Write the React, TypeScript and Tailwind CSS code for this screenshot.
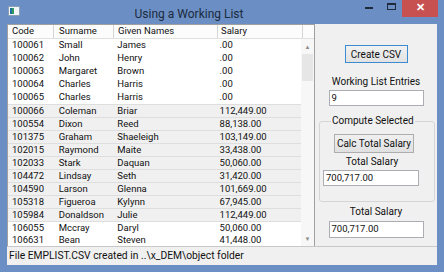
import React from 'react';

type Row = { code: string; surname: string; given: string; salary: string; sel?: boolean };

const rows: Row[] = [
  { code: '100061', surname: 'Small', given: 'James', salary: '.00' },
  { code: '100062', surname: 'John', given: 'Henry', salary: '.00' },
  { code: '100063', surname: 'Margaret', given: 'Brown', salary: '.00' },
  { code: '100064', surname: 'Charles', given: 'Harris', salary: '.00' },
  { code: '100065', surname: 'Charles', given: 'Harris', salary: '.00' },
  { code: '100066', surname: 'Coleman', given: 'Briar', salary: '112,449.00', sel: true },
  { code: '100554', surname: 'Dixon', given: 'Reed', salary: '88,138.00', sel: true },
  { code: '101375', surname: 'Graham', given: 'Shaeleigh', salary: '103,149.00', sel: true },
  { code: '102015', surname: 'Raymond', given: 'Maite', salary: '33,438.00', sel: true },
  { code: '102033', surname: 'Stark', given: 'Daquan', salary: '50,060.00', sel: true },
  { code: '104472', surname: 'Lindsay', given: 'Seth', salary: '31,420.00', sel: true },
  { code: '104590', surname: 'Larson', given: 'Glenna', salary: '101,669.00', sel: true },
  { code: '105318', surname: 'Figueroa', given: 'Kylynn', salary: '67,945.00', sel: true },
  { code: '105984', surname: 'Donaldson', given: 'Julie', salary: '112,449.00', sel: true },
  { code: '106055', surname: 'Mccray', given: 'Daryl', salary: '50,060.00' },
  { code: '106631', surname: 'Bean', given: 'Steven', salary: '41,448.00' },
];

const font = { fontFamily: 'Roboto, "Open Sans", sans-serif' };

// маленькая иконка формы в заголовке
const FormIcon = () => (
  <svg width="12" height="10" viewBox="0 0 12 10">
    <rect x="0.5" y="0.5" width="11" height="9" fill="#f4f6f8" stroke="#8aa0b8" />
    <rect x="2" y="2" width="4" height="6" fill="#2e9a5e" />
    <rect x="2" y="2" width="2" height="6" fill="#1f6f9a" />
  </svg>
);

const TextBox = ({ value, className }: { value: string; className: string }) => (
  <div className={`bg-white border border-[#abadb3] flex items-center pl-[2px] text-[9.5px] text-[#111] ${className}`}>
    {value}
  </div>
);

const App: React.FC = () => {
  return (
    <div className="w-[444px] h-[272px] bg-[#6b8fc4] flex flex-col overflow-hidden" style={font}>
      {/* Заголовок окна */}
      <div className="h-[24px] flex items-start relative">
        <div className="pl-[8px] pt-[6px]">
          <FormIcon />
        </div>
        <div className="flex-1 text-center text-[12px] text-[#1b2a3c] pt-[5px]">Using a Working List</div>
        <div className="flex items-start">
          <div className="w-[22px] h-[16px] flex items-center justify-center">
            <div className="w-[8px] h-[2px] bg-[#1f2b3a]" />
          </div>
          <div className="w-[22px] h-[16px] flex items-center justify-center">
            <div className="w-[9px] h-[7px] border border-[#1f2b3a] border-t-2 mb-[4px]" />
          </div>
          <div className="w-[36px] h-[17px] bg-[#c75050] flex items-center justify-center text-white text-[11px] font-bold mr-[6px]">
            ✕
          </div>
        </div>
      </div>

      {/* Клиентская область */}
      <div className="flex-1 mx-[7px] mb-[7px] bg-[#f0f0f0] flex flex-col min-h-0">
        <div className="flex flex-1 min-h-0">
          {/* Таблица */}
          <div className="w-[308px] border border-b-0 border-[#a0a0a0] bg-white flex flex-col text-[9.5px] text-[#111]">
            <div className="h-[14px] flex border-b border-[#e0e0e0] bg-[#fcfcfc]">
              <div className="w-[46px] pl-[4px] border-r border-[#d5d5d5] flex items-center">Code</div>
              <div className="w-[60px] pl-[5px] border-r border-[#d5d5d5] flex items-center">Surname</div>
              <div className="w-[104px] pl-[4px] border-r border-[#d5d5d5] flex items-center">Given Names</div>
              <div className="w-[85px] pl-[3px] border-r border-[#d5d5d5] flex items-center">Salary</div>
              <div className="flex-1" />
            </div>
            <div className="flex flex-1 min-h-0">
              <div className="w-[293px] overflow-hidden">
                {rows.map((r, i) => (
                  <div
                    key={r.code}
                    className={`h-[13px] flex items-center ${
                      r.sel ? 'bg-[#f0f0f0] border-t border-[#dedede]' : ''
                    } ${!r.sel && i > 0 && rows[i - 1].sel ? 'border-t border-[#dedede]' : ''}`}
                  >
                    <div className="w-[46px] pl-[4px]">{r.code}</div>
                    <div className="w-[60px] pl-[5px]">{r.surname}</div>
                    <div className="w-[104px] pl-[4px]">{r.given}</div>
                    <div className="w-[85px] pl-[3px]">{r.salary}</div>
                  </div>
                ))}
              </div>
              {/* Полоса прокрутки */}
              <div className="flex-1 bg-[#f7f7f7] flex flex-col items-stretch">
                <div className="h-[15px] flex items-center justify-center text-[6px] text-[#8a8a8a]">▲</div>
                <div className="h-[27px] mx-[1px] bg-[#e6e6e6]" />
                <div className="flex-1" />
                <div className="h-[15px] flex items-center justify-center text-[6px] text-[#8a8a8a]">▼</div>
              </div>
            </div>
          </div>

          {/* Правая панель */}
          <div className="flex-1 flex flex-col items-center text-[10px] text-[#111]">
            <div className="mt-[21px] w-[63px] h-[18px] border border-[#3c8bd0] bg-gradient-to-b from-[#f2f2f2] to-[#e2e2e2] flex items-center justify-center">
              Create CSV
            </div>
            <div className="mt-[13px] h-[12px] leading-[12px]">Working List Entries</div>
            <TextBox value="9" className="mt-[2px] w-[95px] h-[16px]" />

            <div className="mt-[15px] w-[116px] h-[81px] ml-[2px] border border-[#d5d5d5] rounded-[3px] relative flex flex-col items-start">
              <div className="absolute top-[-7px] left-[11px] px-[1px] bg-[#f0f0f0] leading-[12px]">Compute Selected</div>
              <div className="mt-[12px] ml-[14px] w-[80px] h-[19px] border border-[#adadad] bg-gradient-to-b from-[#f0f0f0] to-[#e0e0e0] flex items-center justify-center">
                Calc Total Salary
              </div>
              <div className="mt-[3px] w-[104px] text-center leading-[12px]">Total Salary</div>
              <TextBox value="700,717.00" className="mt-[2px] ml-[3px] w-[96px] h-[16px]" />
            </div>

            <div className="mt-[4px] leading-[12px]">Total Salary</div>
            <TextBox value="700,717.00" className="mt-[3px] w-[95px] h-[17px]" />
          </div>
        </div>

        {/* Строка состояния */}
        <div className="h-[19px] border-t border-[#c8c8c8] flex items-center pl-[2px] text-[10.3px] text-[#111]">
          File EMPLIST.CSV created in ..\x_DEM\object folder
        </div>
      </div>
    </div>
  );
};

export default App;
